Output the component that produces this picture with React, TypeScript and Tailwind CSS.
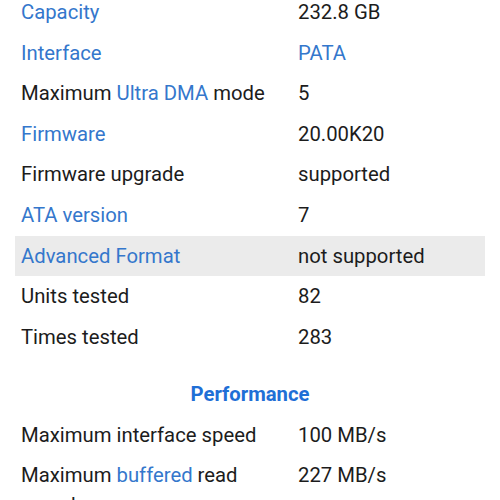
import React from 'react';

type Part = { t: string; link?: boolean };

interface Row {
  label: Part[];
  value: string;
  valueLink?: boolean;
  shaded?: boolean;
}

const general: Row[] = [
  { label: [{ t: 'Capacity', link: true }], value: '232.8 GB' },
  { label: [{ t: 'Interface', link: true }], value: 'PATA', valueLink: true },
  { label: [{ t: 'Maximum ' }, { t: 'Ultra DMA', link: true }, { t: ' mode' }], value: '5' },
  { label: [{ t: 'Firmware', link: true }], value: '20.00K20' },
  { label: [{ t: 'Firmware upgrade' }], value: 'supported' },
  { label: [{ t: 'ATA version', link: true }], value: '7' },
  { label: [{ t: 'Advanced Format', link: true }], value: 'not supported', shaded: true },
  { label: [{ t: 'Units tested' }], value: '82' },
  { label: [{ t: 'Times tested' }], value: '283' },
];

const performance: Row[] = [
  { label: [{ t: 'Maximum interface speed' }], value: '100 MB/s' },
  { label: [{ t: 'Maximum ' }, { t: 'buffered', link: true }, { t: ' read speed' }], value: '227 MB/s' },
];

function SpecRow({ row }: { row: Row }) {
  return (
    <div className={`flex items-start ${row.shaded ? 'bg-[#ebebeb]' : ''}`}>
      <div className="w-[277px] shrink-0 pl-[6px] pr-2 py-[5px] leading-[30px]">
        {row.label.map((p, i) => (
          <span key={i} className={p.link ? 'text-[#3477cc]' : ''}>
            {p.t}
          </span>
        ))}
      </div>
      <div className={`flex-1 pl-[6px] py-[5px] leading-[30px] ${row.valueLink ? 'text-[#3477cc]' : ''}`}>
        {row.value}
      </div>
    </div>
  );
}

export default function App() {
  return (
    <div className="w-[500px] h-[500px] overflow-hidden bg-white">
      <div
        className="-mt-[8px] px-[15px] text-[20.3px] text-[#1c1c1c]"
        style={{ fontFamily: 'Roboto, "Noto Sans", sans-serif' }}
      >
        <div className="flex flex-col gap-[0.6px]">
          {general.map((r, i) => (
            <SpecRow key={i} row={r} />
          ))}
        </div>

        {/* Performance */}
        <h2 className="mt-[24px] mb-[8px] text-center font-bold text-[20.3px] leading-[26px] text-[#1f6fd6]">
          Performance
        </h2>

        <div className="flex flex-col gap-[0.6px]">
          {performance.map((r, i) => (
            <SpecRow key={i} row={r} />
          ))}
        </div>
      </div>
    </div>
  );
}
